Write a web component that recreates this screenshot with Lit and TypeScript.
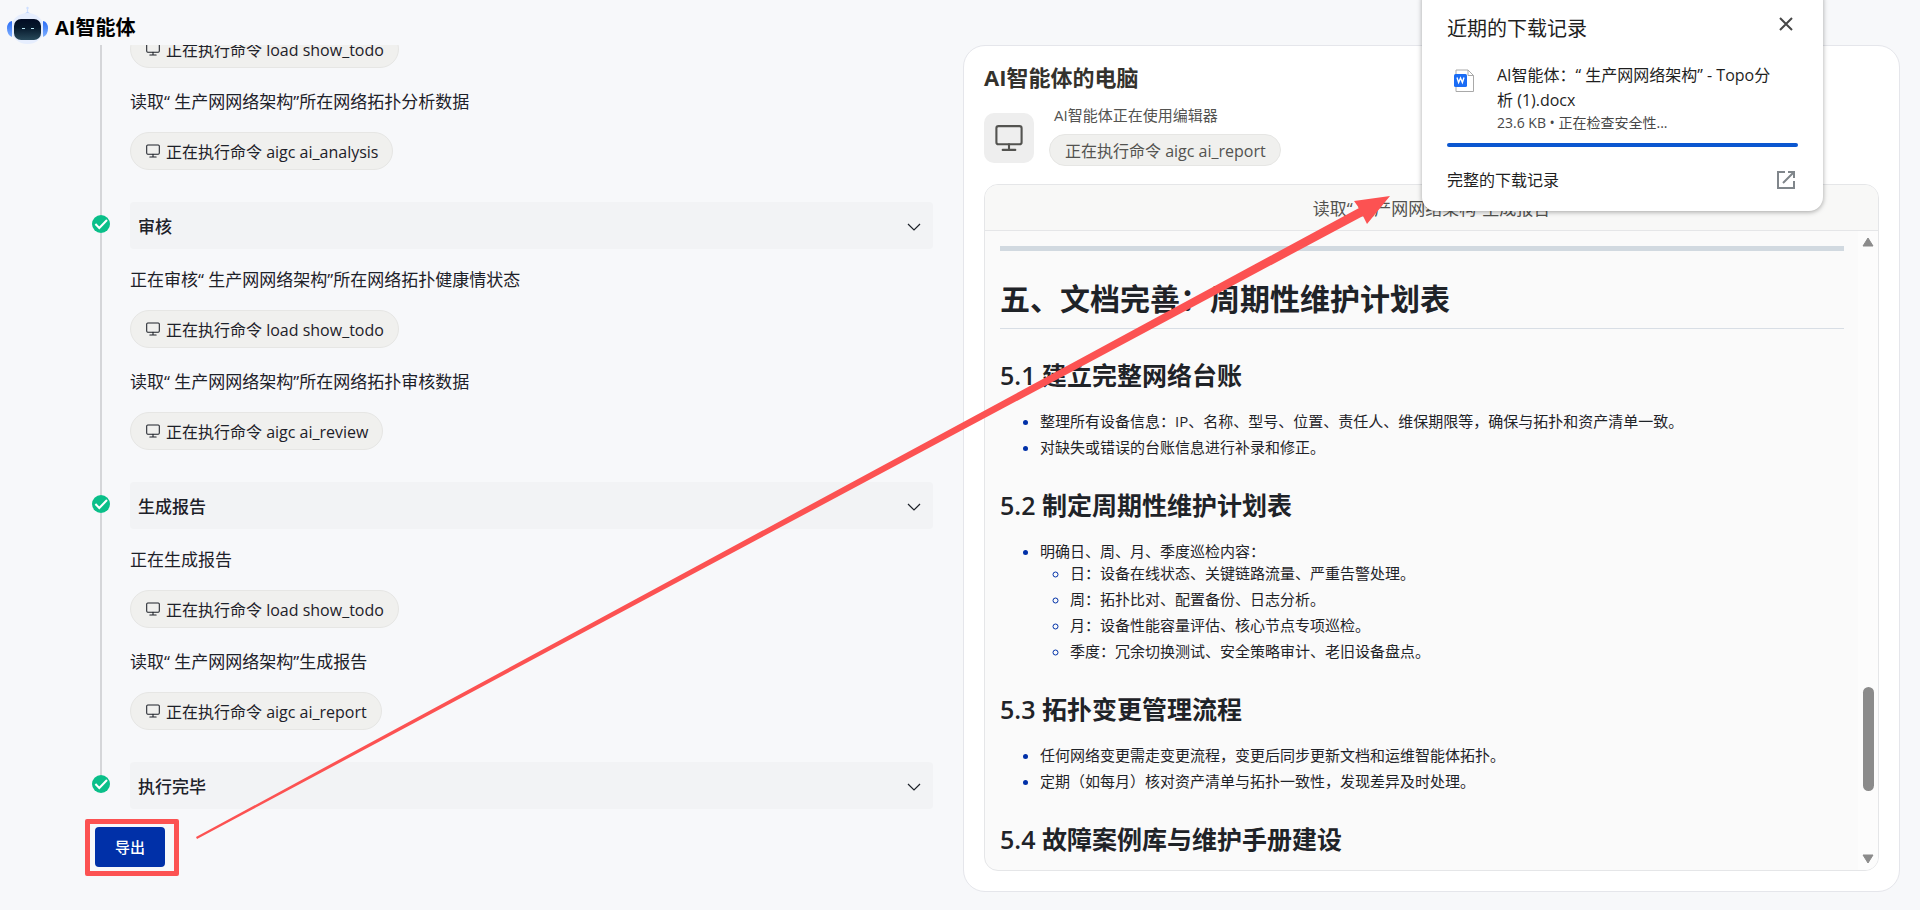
import { LitElement, html, css } from "lit";
import { customElement } from "lit/decorators.js";

const monitor = html`<svg class="mon" viewBox="0 0 20 20" fill="none" stroke="currentColor" stroke-width="1.5" stroke-linecap="round" stroke-linejoin="round" aria-hidden="true">
  <rect x="1" y="1.500" width="18" height="13" rx="1.500"></rect><path d="M10 14.500V18M5.500 18.500H14.500"></path></svg>`;

const check = html`<svg class="check" viewBox="0 0 18 18" aria-hidden="true">
  <circle cx="9" cy="9" r="9" fill="#0abf89"></circle>
  <path d="M3.400 9 7.300 13 15 5" fill="none" stroke="#fff" stroke-width="2"></path></svg>`;

type Line = { text: string; command: string };
type Step = { title: string; lines: Line[] };

const steps: Step[] = [
  {
    title: "审核",
    lines: [
      { text: "正在审核“ 生产网网络架构”所在网络拓扑健康情状态", command: "load show_todo" },
      { text: "读取“ 生产网网络架构”所在网络拓扑审核数据", command: "aigc ai_review" },
    ],
  },
  {
    title: "生成报告",
    lines: [
      { text: "正在生成报告", command: "load show_todo" },
      { text: "读取“ 生产网网络架构”生成报告", command: "aigc ai_report" },
    ],
  },
  { title: "执行完毕", lines: [] },
];

@customElement("app-root")
export class AppRoot extends LitElement {
  static styles = css`
    :host {
      display: flex;
      flex-direction: column;
      position: relative;
      height: 100vh;
      overflow: hidden;
      box-sizing: border-box;
      background: #f7f8fa;
      color: #1d2129;
      font-family: "Open Sans", "Noto Sans CJK SC", sans-serif;
      font-size: 16px;
    }
    * { box-sizing: border-box; }
    h1, h2, h3, p, ul { margin: 0; padding: 0; font-weight: inherit; }
    header {
      display: flex;
      align-items: center;
      gap: 6px;
      height: 45px;
      padding: 10px 6px 0;
      flex: none;
    }
    .logo { width: 43px; height: 42px; margin-top: -4px; }
    .brand { font-size: 20px; line-height: 24px; font-weight: 700; color: #000; }
    main {
      flex: 1;
      min-height: 0;
      display: grid;
      grid-template-columns: minmax(0, 933fr) minmax(0, 937fr);
      gap: 30px;
      padding-right: 20px;
      padding-bottom: 18px;
    }
    .left {
      display: flex;
      flex-direction: column;
      justify-content: flex-end;
      min-height: 0;
      overflow: hidden;
      padding-left: 92px;
      padding-bottom: 25px;
    }
    .step { display: grid; grid-template-columns: 18px minmax(0, 1fr); column-gap: 20px; }
    .rail {
      display: flex;
      flex-direction: column;
      align-items: center;
    }
    .lead { width: 2px; height: 13px; background: #d5d6d9; }
    .line { width: 2px; flex: 1; background: #d5d6d9; }
    .check { width: 18px; height: 18px; flex: none; display: block; }
    .bar {
      display: flex;
      align-items: center;
      justify-content: space-between;
      width: 100%;
      height: 47px;
      padding: 2px 12px 0 8px;
      border: 0;
      border-radius: 4px;
      background: #f2f3f5;
      color: #1d2129;
      font: 500 17px/24px "Open Sans", "Noto Sans CJK SC", sans-serif;
    }
    .bar svg { width: 14px; height: 14px; }
    .lines { padding-bottom: 29px; }
    .block {
      display: flex;
      flex-direction: column;
      justify-content: flex-end;
      height: 102px;
      padding-bottom: 3px;
    }
    .say { margin-bottom: 18px; font-size: 17px; line-height: 24px; white-space: nowrap; }
    .chip {
      display: flex;
      align-items: center;
      gap: 6px;
      width: fit-content;
      height: 38px;
      padding: 2px 14px 0 15px;
      border: 1px solid #e6e6e4;
      border-radius: 19px;
      background: #f0f0ee;
      font-size: 16px;
      line-height: 24px;
      white-space: nowrap;
    }
    .chip .mon { width: 14px; height: 14px; margin-bottom: 2px; }
    .actions { padding-left: 3px; padding-top: 18px; }
    .export {
      position: relative;
      display: block;
      width: 70px;
      height: 40px;
      border: 0;
      border-radius: 4px;
      background: #0030a8;
      color: #fff;
      font: 500 15px/24px "Open Sans", "Noto Sans CJK SC", sans-serif;
    }
    .card {
      display: flex;
      flex-direction: column;
      min-height: 0;
      padding: 18px 20px 20px;
      border: 1px solid #e5e6eb;
      border-radius: 22px;
      background: #fff;
    }
    .title { font-size: 22px; line-height: 26px; font-weight: 700; color: #34322d; }
    .who { display: flex; align-items: flex-start; gap: 15px; margin: 15px 0 18px; }
    .tile {
      display: grid;
      place-items: center;
      width: 50px;
      height: 50px;
      margin-top: 8px;
      border-radius: 10px;
      background: #eee;
      color: #535350;
    }
    .tile .mon { width: 28px; height: 28px; }
    .who p { padding-left: 5px; font-size: 15px; line-height: 20px; color: #535350; }
    .who .chip { height: 32px; margin-top: 9px; color: #535350; }
    .viewer {
      flex: 1;
      min-height: 0;
      display: flex;
      flex-direction: column;
      overflow: hidden;
      border: 1px solid #e5e6e8;
      border-radius: 14px;
      background: #fafafa;
    }
    .tab {
      flex: none;
      height: 46px;
      border-bottom: 1px solid #e5e6e8;
      background: #f8f8f7;
      text-align: center;
      font-size: 17px;
      line-height: 48px;
      color: #535350;
    }
    .pane { flex: 1; min-height: 0; display: flex; }
    .doc { flex: 1; min-width: 0; overflow: hidden; padding: 15px 14px 0 15px; color: #1f2328; }
    .rule { height: 5px; margin: 0 0 24px; border: 0; background: #d1d9e0; }
    .doc h2 { font-size: 30px; line-height: 47px; height: 54px; font-weight: 700; border-bottom: 1px solid #d8dee5; }
    .doc h3 { font-size: 25px; line-height: 32px; margin: 31px 0 19px; font-weight: 700; }
    .doc h3:first-of-type { margin-top: 30px; }
    .doc h3 span { font-weight: 600; }
    .doc ul { padding-left: 40px; font-size: 15px; line-height: 22px; }
    .doc li + li { margin-top: 4px; }
    .doc li::marker { color: #0030a8; }
    .doc li ul { padding-left: 30px; }
    .scroll {
      width: 20px;
      flex: none;
      display: flex;
      flex-direction: column;
      align-items: center;
      padding: 6px 0;
      background: #fcfcfc;
    }
    .scroll svg { width: 12px; height: 10px; flex: none; }
    .before { flex: 441; }
    .thumb { flex: 104; width: 11px; border-radius: 6px; background: #8b8b8b; }
    .after { flex: 63; }
    .popup {
      position: absolute;
      top: -14px;
      right: 97px;
      width: 401px;
      padding: 26px 25px 18px;
      border-radius: 14px;
      background: #fff;
      box-shadow: 0 1px 5px rgba(0, 0, 0, 0.35);
      color: #1f1f1f;
    }
    .row { display: flex; justify-content: space-between; align-items: center; }
    .head { align-items: flex-start; }
    .popup h2 { font-size: 20px; line-height: 34px; }
    .icon { padding: 0; border: 0; background: none; color: #474747; display: block; }
    .icon svg { display: block; width: 24px; height: 24px; }
    .file { display: flex; gap: 22px; padding: 17px 0 10px 6px; }
    .file svg { width: 22px; height: 24px; margin-top: 6px; flex: none; }
    .name { padding-right: 20px; font-size: 16px; line-height: 25px; }
    .meta { font-size: 14px; line-height: 20px; color: #474747; }
    progress {
      display: block;
      appearance: none;
      width: 100%;
      height: 4px;
      border: 0;
      border-radius: 2px;
      overflow: hidden;
      background: #0b57d0;
    }
    progress::-webkit-progress-bar { background: #d3e3fd; }
    progress::-webkit-progress-value { background: #0b57d0; }
    .popup a { margin-top: 20px; font-size: 16px; line-height: 26px; color: #1f1f1f; text-decoration: none; }
    .popup a svg { width: 24px; height: 24px; color: #80868b; }
    .mark {
      position: absolute;
      left: -10px;
      top: -8px;
      width: 94px;
      height: 57px;
      border: 5px solid #fc5252;
      border-radius: 2px;
      pointer-events: none;
    }
    .arrow { position: absolute; inset: 0; width: 100%; height: 100%; pointer-events: none; }
  `;

  private chip(command: string, icon = true) {
    return html`<div class="chip">${icon ? monitor : null}<span>正在执行命令 ${command}</span></div>`;
  }

  private block(command: string, text = "") {
    return html`<div class="block">${text ? html`<p class="say">${text}</p>` : null}${this.chip(command)}</div>`;
  }

  private step(step: Step) {
    const last = step.lines.length === 0;
    return html`<section class="step">
      <div class="rail"><span class="lead"></span>${check}${last ? null : html`<span class="line"></span>`}</div>
      <div>
        <button class="bar">${step.title}
          <svg viewBox="0 0 14 14" fill="none" stroke="#1d2129" stroke-width="1.2" aria-hidden="true"><path d="M1 4 7 10 13 4"></path></svg>
        </button>
        ${last ? null : html`<div class="lines">${step.lines.map((l) => this.block(l.command, l.text))}</div>`}
      </div>
    </section>`;
  }

  render() {
    return html`
      <header>
        <svg class="logo" viewBox="0 0 43 42" aria-hidden="true">
          <defs>
            <linearGradient id="ear" x1="0" y1="0" x2="0" y2="1"><stop offset="0" stop-color="#2a6cf5"></stop><stop offset="1" stop-color="#7fb0ff"></stop></linearGradient>
            <linearGradient id="face" x1="0" y1="0" x2="0" y2="1"><stop offset="0" stop-color="#020c24"></stop><stop offset="0.4" stop-color="#06182b"></stop><stop offset="1" stop-color="#28495a"></stop></linearGradient>
          </defs>
          <circle cx="21.500" cy="3" r="1.200" fill="#cfe0ff"></circle>
          <path d="M21.500 3V8" stroke="#cfe0ff" stroke-width="1.200"></path>
          <path d="M18.500 9Q21.500 5 24.500 9Z" fill="#bcd4ff"></path>
          <ellipse cx="21.500" cy="23.500" rx="16.500" ry="15.500" fill="#e6eefe"></ellipse>
          <path d="M6 16Q1 17 1 23.500T6 32Z" fill="url(#ear)"></path>
          <path d="M37 16Q42 17 42 23.500T37 32Z" fill="url(#ear)"></path>
          <rect x="8" y="14" width="27" height="21" rx="7" fill="url(#face)"></rect>
          <path d="M16 23.500h3M25 23.500h3" stroke="#b9e6f5" stroke-width="1.200"></path>
        </svg>
        <h1 class="brand">AI智能体</h1>
      </header>
      <main>
        <div class="left">
          <section class="step">
            <div class="rail"><span class="line"></span></div>
            <div class="lines">
              ${this.block("load show_todo")}
              ${this.block("aigc ai_analysis", "读取“ 生产网网络架构”所在网络拓扑分析数据")}
            </div>
          </section>
          ${steps.map((s) => this.step(s))}
          <div class="actions"><button class="export">导出<span class="mark"></span></button></div>
        </div>
        <div class="card">
          <h2 class="title">AI智能体的电脑</h2>
          <div class="who">
            <div class="tile">${monitor}</div>
            <div><p>AI智能体正在使用编辑器</p>${this.chip("aigc ai_report", false)}</div>
          </div>
          <div class="viewer">
            <div class="tab">读取“ 生产网网络架构”生成报告</div>
            <div class="pane">
              <article class="doc">
                <hr class="rule" />
                <h2>五、文档完善：周期性维护计划表</h2>
                <h3><span>5.1</span> 建立完整网络台账</h3>
                <ul>
                  <li>整理所有设备信息：IP、名称、型号、位置、责任人、维保期限等，确保与拓扑和资产清单一致。</li>
                  <li>对缺失或错误的台账信息进行补录和修正。</li>
                </ul>
                <h3><span>5.2</span> 制定周期性维护计划表</h3>
                <ul>
                  <li>明确日、周、月、季度巡检内容：
                    <ul>
                      <li>日：设备在线状态、关键链路流量、严重告警处理。</li>
                      <li>周：拓扑比对、配置备份、日志分析。</li>
                      <li>月：设备性能容量评估、核心节点专项巡检。</li>
                      <li>季度：冗余切换测试、安全策略审计、老旧设备盘点。</li>
                    </ul>
                  </li>
                </ul>
                <h3><span>5.3</span> 拓扑变更管理流程</h3>
                <ul>
                  <li>任何网络变更需走变更流程，变更后同步更新文档和运维智能体拓扑。</li>
                  <li>定期（如每月）核对资产清单与拓扑一致性，发现差异及时处理。</li>
                </ul>
                <h3><span>5.4</span> 故障案例库与维护手册建设</h3>
              </article>
              <div class="scroll" aria-hidden="true">
                <svg viewBox="0 0 12 10"><path d="M6 1 11 9H1Z" fill="#8b8b8b" stroke="#8b8b8b" stroke-linejoin="round"></path></svg>
                <span class="before"></span><span class="thumb"></span><span class="after"></span>
                <svg viewBox="0 0 12 10"><path d="M6 9 11 1H1Z" fill="#8b8b8b" stroke="#8b8b8b" stroke-linejoin="round"></path></svg>
              </div>
            </div>
          </div>
        </div>
      </main>
      <aside class="popup">
        <div class="row head">
          <h2>近期的下载记录</h2>
          <button class="icon" aria-label="关闭"><svg viewBox="0 0 24 24" fill="none" stroke="currentColor" stroke-width="2"><path d="M6 6 18 18M18 6 6 18"></path></svg></button>
        </div>
        <div class="file">
          <svg viewBox="0 0 22 24" aria-hidden="true">
            <path d="M3 1H15L20.500 6.500V22.500H3Z" fill="#fff" stroke="#a9a9a9" stroke-linejoin="round"></path>
            <path d="M15 1V6.500H20.500" fill="none" stroke="#a9a9a9"></path>
            <rect x="1" y="5" width="13" height="13" rx="1.500" fill="#1a6cf5"></rect>
            <path d="M4 8.500 5.600 13.500 7.500 9 9.400 13.500 11 8.500" fill="none" stroke="#fff" stroke-width="1.400"></path>
          </svg>
          <div>
            <p class="name">AI智能体：“ 生产网网络架构” - Topo分析 (1).docx</p>
            <p class="meta">23.6 KB • 正在检查安全性...</p>
          </div>
        </div>
        <progress value="1" max="1" aria-label="下载进度"></progress>
        <a class="row" href="#">完整的下载记录
          <svg viewBox="0 0 24 24" fill="none" stroke="currentColor" stroke-width="2" aria-hidden="true"><path d="M11 4H4V20H20V13M14 4H20V10M20 4 9 15"></path></svg>
        </a>
      </aside>
      <svg class="arrow" viewBox="0 0 1920 910" preserveAspectRatio="none" aria-hidden="true">
        <path d="M196 837 1359 208 1354 201 1390 196 1367 224 1363 216 197 839Z" fill="#fc5252"></path>
      </svg>
    `;
  }
}
